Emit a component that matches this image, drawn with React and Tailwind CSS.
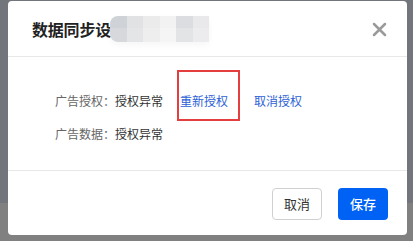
import React from "react";

const font = { fontFamily: '"Noto Sans CJK SC", "Noto Sans", sans-serif' };

const blurTop = ["#cfd2d6", "#e1e2e4", "#ebebec", "#f2f2f3", "#dcdde0", "#e9e9eb"];
const blurBottom = ["#d6d8db", "#e4e5e7", "#eeeeef", "#f5f5f5", "#e3e4e6", "#ececee"];

const Row = ({ label, value, children }) => (
  <div className="flex items-center h-[33px] text-[12px]">
    <span className="w-[60px] text-[#666]">{label}</span>
    <span className="text-[#333]">{value}</span>
    {children}
  </div>
);

const App = () => {
  return (
    <div
      className="relative w-[413px] h-[241px] overflow-hidden bg-[linear-gradient(to_bottom,#72767c_203px,#808080_203px)] pl-[8px] pt-[1px]"
      style={font}
    >
      <div className="w-[399px] h-[234px] bg-white rounded-[4px] flex flex-col">
        {/* header */}
        <div className="h-[56px] shrink-0 flex items-center justify-between pl-[24px] pr-[20px] border-b border-[#e8e8e8]">
          <div className="flex items-center">
            <span className="text-[16px] font-semibold text-[#222] tracking-[-0.2px]">数据同步设</span>
            <div className="flex flex-col -ml-[1px] rounded-l-[8px] overflow-hidden shadow-[0_3px_6px_rgba(0,0,0,0.04)]">
              <div className="flex">
                {blurTop.map((c, i) => (
                  <div key={i} className="w-[16.5px] h-[12px]" style={{ background: c }} />
                ))}
              </div>
              <div className="flex">
                {blurBottom.map((c, i) => (
                  <div key={i} className="w-[16.5px] h-[14px]" style={{ background: c }} />
                ))}
              </div>
            </div>
          </div>
          <svg width="15" height="15" viewBox="0 0 15 15" className="mt-[2px]">
            <path d="M2 2 L13 13 M13 2 L2 13" stroke="#9a9a9a" strokeWidth="2.5" strokeLinecap="round" />
          </svg>
        </div>

        {/* body */}
        <div className="h-[114px] shrink-0 flex flex-col pt-[27px] pl-[47px] border-b border-[#e8e8e8]">
          <Row label="广告授权：" value="授权异常">
            <span className="ml-[17px] text-[#2d5fd6]">重新授权</span>
            <span className="ml-[26px] text-[#2d5fd6]">取消授权</span>
          </Row>
          <Row label="广告数据：" value="授权异常" />
        </div>

        {/* footer */}
        <div className="flex-1 flex justify-end items-start pt-[17px] pr-[19px] gap-[16px]">
          <button className="w-[50px] h-[32px] rounded-[4px] border border-[#d0d0d0] bg-white text-[13px] text-[#333]">
            取消
          </button>
          <button className="w-[50px] h-[32px] rounded-[4px] bg-[#0062f5] text-[13px] font-medium text-white">
            保存
          </button>
        </div>
      </div>

      {/* red annotation box */}
      <div className="absolute left-[177px] top-[70px] w-[63px] h-[51px] border-2 border-[#e53e3e]" />
    </div>
  );
};

export default App;
